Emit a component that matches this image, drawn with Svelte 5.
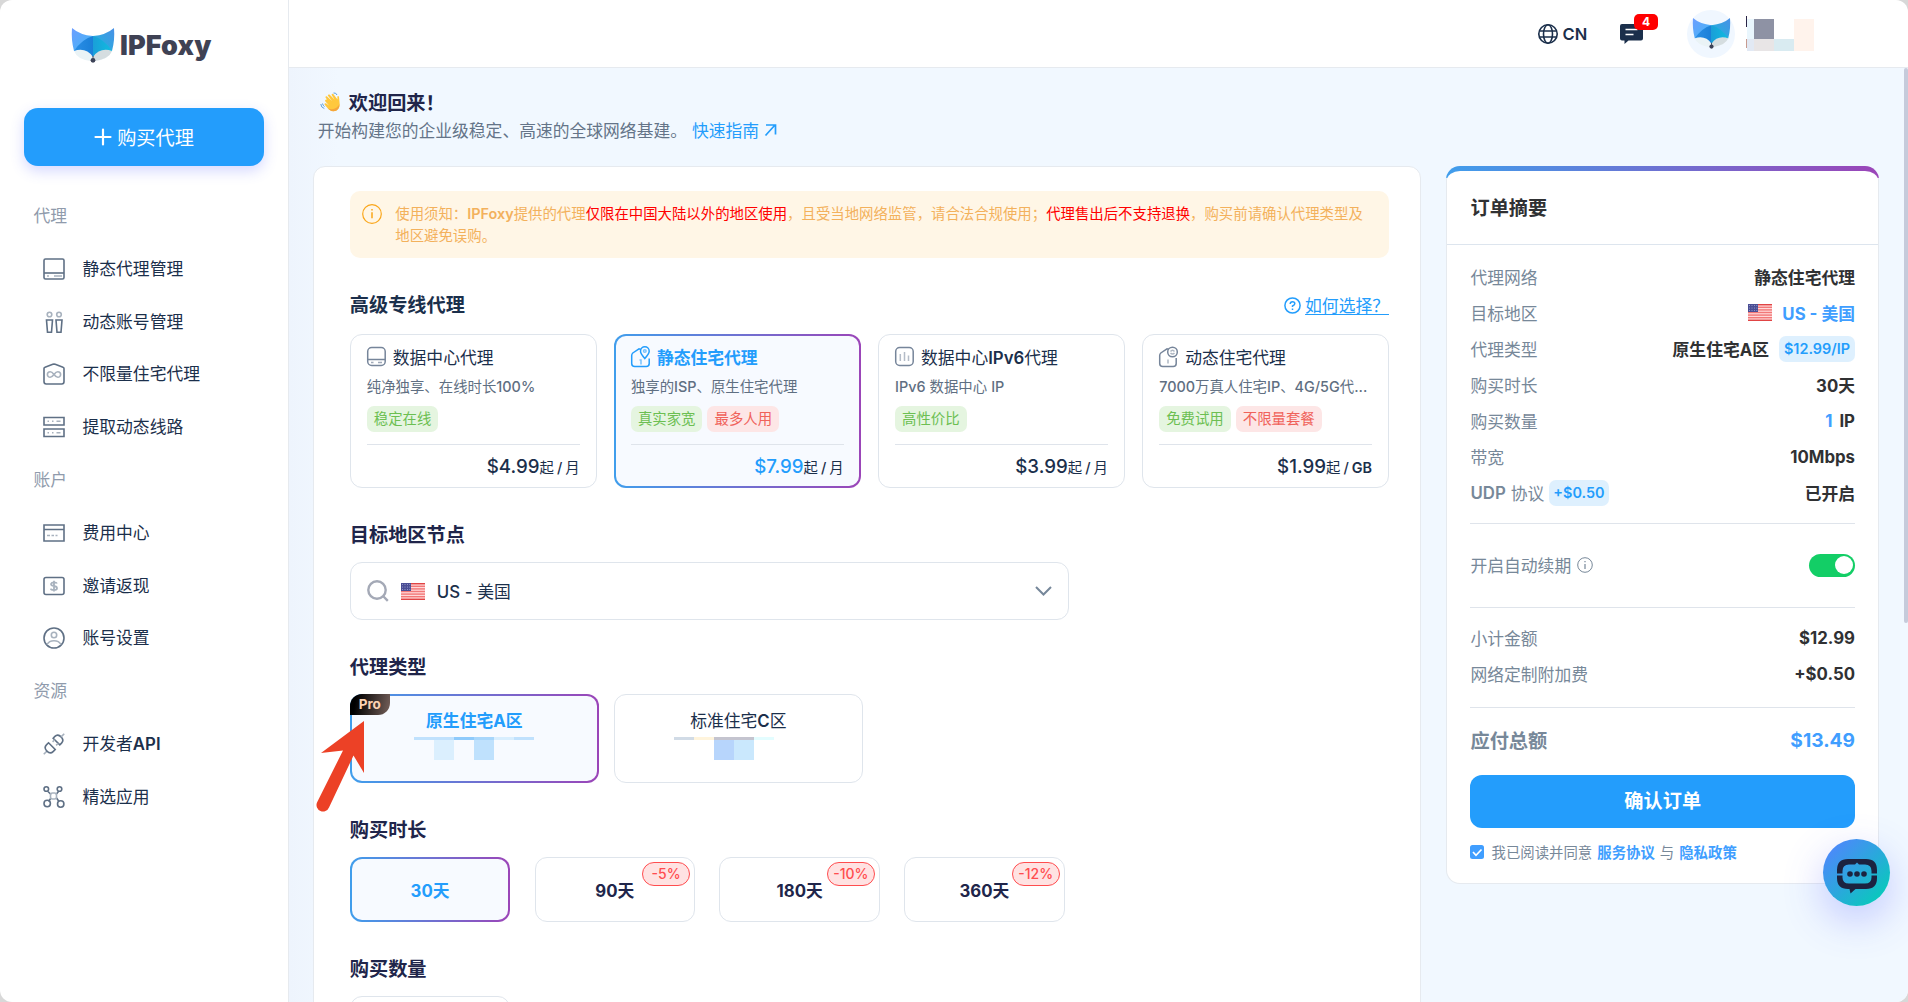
<script>
  const menu = [
    {
      label: '代理',
      items: [
        { icon: 'drive', name: '静态代理管理' },
        { icon: 'people', name: '动态账号管理' },
        { icon: 'infinite', name: '不限量住宅代理' },
        { icon: 'server', name: '提取动态线路' }
      ]
    },
    {
      label: '账户',
      items: [
        { icon: 'card', name: '费用中心' },
        { icon: 'cash', name: '邀请返现' },
        { icon: 'user', name: '账号设置' }
      ]
    },
    {
      label: '资源',
      items: [
        { icon: 'plug', name: '开发者API' },
        { icon: 'nodes', name: '精选应用' }
      ]
    }
  ];

  const products = [
    { id: 'dc', name: '数据中心代理', desc: '纯净独享、在线时长100%', tags: [['稳定在线', 'green']], price: '$4.99', unit: '月' },
    { id: 'isp', name: '静态住宅代理', desc: '独享的ISP、原生住宅代理', tags: [['真实家宽', 'green'], ['最多人用', 'red']], price: '$7.99', unit: '月' },
    { id: 'ipv6', name: '数据中心IPv6代理', desc: 'IPv6 数据中心 IP', tags: [['高性价比', 'green']], price: '$3.99', unit: '月' },
    { id: 'dyn', name: '动态住宅代理', desc: '7000万真人住宅IP、4G/5G代...', tags: [['免费试用', 'green'], ['不限量套餐', 'red']], price: '$1.99', unit: 'GB' }
  ];

  const types = [
    {
      name: '原生住宅A区',
      pro: true,
      shift: 0,
      strip: ['#c0e1fd', '#c0e1fd', '#8ecafb', '#a7d6fb', '#d8eefe', '#c0e1fd'],
      blocks: ['', '#dbeffe', '', '#bfe1fd', '', '']
    },
    {
      name: '标准住宅C区',
      pro: false,
      shift: 4,
      strip: ['#d1dbe6', '#fff4dc', '#c4c4cf', '#c4c4cf', '#e3fdff', ''],
      blocks: ['', '', '#b7d5fc', '#cae8fd', '', '']
    }
  ];

  const durations = [
    { days: 30 },
    { days: 90, off: '-5%' },
    { days: 180, off: '-10%' },
    { days: 360, off: '-12%' }
  ];

  let product = $state('isp');
  let type = $state('原生住宅A区');
  let days = $state(30);
  let autoRenew = $state(true);

  // latin runs are set heavier than the chinese around them
  const split = (text) => text.split(/([A-Za-z0-9$%.\/+\-]+)/).filter(Boolean);
  const isLatin = (part) => /^[A-Za-z0-9$%.\/+\-]/.test(part);
</script>

{#snippet mixed(text)}{#each split(text) as part}{#if isLatin(part)}<b class="en">{part}</b>{:else}{part}{/if}{/each}{/snippet}

{#snippet fox(w, h)}
  <svg width={w} height={h} viewBox="0 0 42 35">
    <defs>
      <linearGradient id="foxL" x1="0" y1="0" x2="1" y2="1">
        <stop offset="0" stop-color="#6d9dff" /><stop offset="1" stop-color="#3fb8f5" />
      </linearGradient>
      <linearGradient id="foxR" x1="1" y1="0" x2="0" y2="1">
        <stop offset="0" stop-color="#4a90e6" /><stop offset="1" stop-color="#1cb6dd" />
      </linearGradient>
      <linearGradient id="foxM" x1="0" y1="0.5" x2="1" y2="0.5">
        <stop offset="0" stop-color="#2b8fe6" /><stop offset="0.5" stop-color="#1a7fd8" />
        <stop offset="0.5" stop-color="#1a9fd8" /><stop offset="1" stop-color="#10bce0" />
      </linearGradient>
    </defs>
    <path d="M2 23 Q5 31 18 33 L21 28 L24 33 Q37 31 40 23 L30 20 L12 20Z" fill="#eaf3f6" />
    <path d="M40 23 Q37 31 22 33 L21 27 L31 20Z" fill="#d5dde0" />
    <path d="M0 0 Q8 7 21 8 L21 12 L2 23 Q-1 12 0 0Z" fill="url(#foxL)" />
    <path d="M42 0 Q34 7 21 8 L21 12 L40 23 Q43 12 42 0Z" fill="url(#foxR)" />
    <path d="M21 8 Q10 11 2 23 Q14 19 21 29 Q28 19 40 23 Q32 11 21 8Z" fill="url(#foxM)" />
    <path d="M21 28v3" stroke="#3c4257" />
    <circle cx="21" cy="32.3" r="2.4" fill="#3c4257" />
  </svg>
{/snippet}

{#snippet flag()}
  <svg class="flag" width="24" height="17" viewBox="0 0 24 17">
    <rect width="24" height="17" rx="1" fill="#ffd9d9" />
    {#each [0, 1, 2, 3, 4, 5, 6] as i}
      <rect y={i * 2.6} width="24" height="1.4" fill={i === 0 || i === 6 ? '#e04444' : '#f27878'} />
    {/each}
    <rect width="10" height="8" fill="#4a4e94" />
    <g fill="#a9abd6">
      {#each [1.5, 4, 6.5] as y}
        {#each [1.5, 4, 6.5, 8.8] as x}<circle cx={x} cy={y} r=".5" />{/each}
      {/each}
    </g>
  </svg>
{/snippet}

{#snippet menuIcon(name)}
  <svg width="22" height="22" viewBox="0 0 22 22" fill="none" stroke="#5f7085" stroke-width="1.6">
    {#if name === 'drive'}
      <rect x="1" y="1" width="20" height="20" rx="1.5" /><path d="M1 15h20" />
      <path d="M4 18h2M11 18h8" stroke="#a8b2be" />
    {:else if name === 'people'}
      <circle cx="6.5" cy="3.5" r="2.3" stroke="#a8b2be" /><circle cx="16" cy="3.5" r="2.3" stroke="#a8b2be" />
      <path d="M3.5 9h6l-1 12.3h-4zM13 9h6l-1 12.3h-4z" />
    {:else if name === 'infinite'}
      <path d="M1 18.5V5.500Q1 4.600 2 4.300L9.800 1.300Q11 .900 12.200 1.300L20 4.300Q21 4.600 21 5.500V18.500Q21 21 18.800 21H3.200Q1 21 1 18.500Z" />
      <path d="M11 11.500C9.500 9.500 8.500 8.700 7.200 8.700a2.800 2.800 0 0 0 0 5.600C8.500 14.300 9.500 13.500 11 11.500S13.500 8.700 14.800 8.700a2.800 2.800 0 0 1 0 5.600C13.500 14.300 12.500 13.500 11 11.500Z" stroke="#a8b2be" />
    {:else if name === 'server'}
      <path d="M1 1.500h20v7.500H1zM1 13h20v7.500H1z" />
      <path d="M4.500 5.300h1.500M9 5.300h1.500M13.500 5.300h4M4.500 16.800h1.500M9 16.800h1.500M13.500 16.800h4" stroke="#a8b2be" />
    {:else if name === 'card'}
      <path d="M1 3h20v16H1zM1 7.500h20" />
      <path d="M4 13.500h3M8.500 13.500h2.500M12.500 13.500h2" stroke="#a8b2be" />
    {:else if name === 'cash'}
      <rect x="1" y="2.500" width="20" height="17" rx="2" />
      <path d="M14 8.500Q13.500 7.300 11 7.300T8 9q0 1.600 3 2t3 2.200-3 1.800-3.200-1.400M11 5.700v10.800" stroke="#a8b2be" stroke-width="1.800" />
    {:else if name === 'user'}
      <circle cx="11" cy="11" r="10" />
      <circle cx="11" cy="8" r="2.700" stroke="#a8b2be" /><path d="M4 17.500Q6 13.700 11 13.700T18 17.500" stroke="#a8b2be" />
    {:else if name === 'plug'}
      <g transform="rotate(45 11 11)">
        <path d="M6.300 7.500V5Q6.300 1 11 1t4.700 4v2.500z" /><path d="M11 1v-4.500M11 21v4.500M8.500 7.500v3M13.500 7.500v3" stroke="#a8b2be" />
        <path d="M6.300 14V17Q6.300 21 11 21t4.700-4V14z" />
      </g>
    {:else}
      <path d="M5 5.500l3 3M15.500 5.500l-2.500 3M5.500 15.500l2.500-3.500M16 15.500l-2.500-3.500" />
      <rect x="7.500" y="7" width="6" height="6" rx="2" stroke="#a8b2be" />
      <circle cx="3.300" cy="3" r="2.300" /><circle cx="16.500" cy="3" r="2.300" />
      <circle cx="4.200" cy="17.500" r="3.200" /><circle cx="17.700" cy="18" r="3.200" />
    {/if}
  </svg>
{/snippet}

{#snippet productIcon(id)}
  <svg width="19" height="21" viewBox="0 0 19 21" fill="none" stroke="currentColor" stroke-width="1.500">
    {#if id === 'dc'}
      <rect x=".7" y="1.500" width="17.500" height="18" rx="4" /><path d="M.7 13.500h17.500" /><path d="M4 16.500h2.500M11 16.500h4" opacity=".7" />
    {:else if id === 'ipv6'}
      <rect x=".7" y="1.500" width="17.500" height="18" rx="4" />
      <path d="M5.300 8v7M9.500 6v9M13.500 9.500v5.500" opacity=".55" />
    {:else if id === 'isp'}
      <path d="M10 3.500 8 2.800 1.800 7Q.7 8 .7 9.500V17.500q0 3 3 3h11.500q3 0 3-3v-5" />
      <path d="M13.800 12.500Q9.500 7.500 9.500 5.200a4.300 4.300 0 0 1 8.700 0Q18.200 7.500 13.800 12.500Z" /><circle cx="13.800" cy="5" r="1.300" opacity=".6" />
      <path d="M8.500 14h1.500v4.500" opacity=".6" />
    {:else}
      <path d="M9.500 3.300 8 2.800 1.800 7Q.7 8 .7 9.500V17.500q0 3 3 3h10.500q3 0 3-3v-5.500" />
      <circle cx="13.500" cy="6" r="4.800" /><path d="M11.500 5.500q2-2.500 4 0M15.500 7q-2 2-4 0" opacity=".6" />
      <path d="M9 13.500v4" opacity=".6" />
    {/if}
  </svg>
{/snippet}

<div class="app">
  <aside class="sidebar">
    <div class="logo">
      {@render fox(42, 35)}
      <span>IPFoxy</span>
    </div>
    <button class="buy">
      <svg width="18" height="18" viewBox="0 0 18 18"><path d="M9 1.500v15M1.500 9h15" stroke="#fff" stroke-width="2.200" stroke-linecap="round" /></svg>
      <span>购买代理</span>
    </button>
    <nav>
      {#each menu as group}
        <div class="group-label">{group.label}</div>
        {#each group.items as item}
          <a class="menu-item" href="#top">{@render menuIcon(item.icon)}<span>{@render mixed(item.name)}</span></a>
        {/each}
      {/each}
    </nav>
  </aside>

  <div class="body">
    <header class="topbar">
      <div class="lang">
        <svg width="20" height="20" viewBox="0 0 20 20" fill="none" stroke="#1b2f4b" stroke-width="1.600">
          <circle cx="10" cy="10" r="9.200" /><ellipse cx="10" cy="10" rx="4.500" ry="9.200" /><path d="M1.500 7h17M1.500 13h17" />
        </svg>
        CN
      </div>
      <div class="message">
        <svg width="23" height="20" viewBox="0 0 23 20">
          <path d="M2 0h19q2 0 2 2v12.500q0 2-2 2H8.500L4.500 20v-3.500H2q-2 0-2-2V2Q0 0 2 0Z" fill="#1b2f4b" />
          <path d="M5.500 5.500h12M5.500 10.500h8" stroke="#fff" stroke-width="1.500" />
        </svg>
        <span class="count">4</span>
      </div>
      <div class="avatar">{@render fox(37, 31)}</div>
      <svg class="username" width="69" height="36" viewBox="0 0 69 36" shape-rendering="crispEdges">
        <path d="M0 0h1v11H0z" fill="#2a2547" /><path d="M0 23h1v9H0z" fill="#c79b90" />
        <path d="M1 3h7v20H1z" fill="#e9f6fd" /><path d="M8 3h20v20H8z" fill="#8e92a4" />
        <path d="M1 23h7v12H1z" fill="#e2e9f4" /><path d="M8 23h20v12H8z" fill="#e8e5e6" />
        <path d="M28 23h20v12H28z" fill="#d9ebf1" /><path d="M48 3h20v32H48z" fill="#fff3ec" />
      </svg>
    </header>

    <main>
      <div class="welcome">
        <h1>
          <svg width="20" height="20" viewBox="0 0 20 20">
            <path d="M7 7.500 5.500 5.500Q5.300 4 6.800 4.300L12 9 7.800 3.500Q8 2 9.500 2.500L14.500 7.500 11.500 2.800Q12 1.300 13.300 2L17.500 7.500 17.300 4.500Q18.500 3.500 19 5L19.700 12Q19.500 19 13.500 19.300Q10 19.300 7 15.500L4.500 12.500Q4.300 11 6 11.300L9 13.500 5 9Q5 7 7 7.500Z" fill="#ffc83d" />
            <path d="M19.600 12Q19.500 19 13.500 19.300Q10.500 19.300 8 16.500Q16 19 19.600 12Z" fill="#f5a63c" />
            <path d="M13.500 1Q16 .5 17 3M.8 12q.2 3.500 3.500 4.500M2.500 11.500q.3 2 2 3" fill="none" stroke="#5a9fe0" />
          </svg>
          欢迎回来！
        </h1>
        <p>
          开始构建您的企业级稳定、高速的全球网络基建。<a href="#top">快速指南
            <svg width="13" height="14" viewBox="0 0 13 14"><path d="M1.500 12.500 11 2M2 2h9.500v9.500" fill="none" stroke="currentColor" stroke-width="1.700" /></svg></a>
        </p>
      </div>

      <div class="columns">
        <section class="panel">
          <div class="notice">
            <svg width="20" height="20" viewBox="0 0 20 20" fill="none" stroke="#faa61a" stroke-width="1.200">
              <circle cx="10" cy="10" r="9.300" /><path d="M10 8.300v6M10 5v1.600" stroke-width="1.500" />
            </svg>
            <p>
              使用须知：<b class="en">IPFoxy</b>提供的代理<em>仅限在中国大陆以外的地区使用</em>，且受当地网络监管，请合法合规使用；<em>代理售出后不支持退换</em>，购买前请确认代理类型及<br />地区避免误购。
            </p>
          </div>

          <div class="section-head first">
            <h2>高级专线代理</h2>
            <a class="help" href="#top">
              <svg width="17" height="17" viewBox="0 0 17 17" fill="none" stroke="currentColor" stroke-width="1.500">
                <circle cx="8.500" cy="8.500" r="7.600" /><path d="M6.200 7q0-2.300 2.300-2.300T10.800 6.800Q10.800 8 8.500 9v1M8.500 11.500v1.500" />
              </svg>
              <u>如何选择？</u>
            </a>
          </div>
          <div class="products">
            {#each products as item}
              <button class="product" class:active={product === item.id} onclick={() => (product = item.id)}>
                <span class="product-name">{@render productIcon(item.id)}<span>{@render mixed(item.name)}</span></span>
                <span class="desc">{@render mixed(item.desc)}</span>
                <span class="tags">
                  {#each item.tags as [text, color]}<span class="tag {color}">{text}</span>{/each}
                </span>
                <span class="price"><strong>{item.price}</strong>起<i>/</i>{@render mixed(item.unit)}</span>
              </button>
            {/each}
          </div>

          <div class="section-head"><h2>目标地区节点</h2></div>
          <div class="region">
            <svg width="22" height="22" viewBox="0 0 22 22" fill="none" stroke="#a4a9b6" stroke-width="2.400"><circle cx="10" cy="10" r="8.700" /><path d="M16 16l4.800 4.800" /></svg>
            {@render flag()}
            <span>{@render mixed('US - 美国')}</span>
            <svg class="chevron" width="17" height="10" viewBox="0 0 17 10" fill="none" stroke="#76879a" stroke-width="2"><path d="M1 1l7.500 7.500L16 1" /></svg>
          </div>

          <div class="section-head"><h2>代理类型</h2></div>
          <div class="types">
            {#each types as item}
              <button class="type" class:active={type === item.name} onclick={() => (type = item.name)}>
                {#if item.pro}<span class="pro"><span>Pro</span></span>{/if}
                <span>{@render mixed(item.name)}</span>
                <svg width="120" height="23" viewBox="{item.shift} 0 120 23" shape-rendering="crispEdges">
                  {#each item.strip as color, i}<rect x={i * 20} width="20" height="3" fill={color || 'none'} />{/each}
                  {#each item.blocks as color, i}<rect x={i * 20} y="3" width="20" height="20" fill={color || 'none'} />{/each}
                </svg>
              </button>
            {/each}
            <svg class="arrow" width="52" height="94" viewBox="0 0 52 94" fill="#ec4126">
              <path d="M49 2 L49 54 L38.500 36.500 L14 88.500 A5.500 5.500 0 0 1 2 83.500 L28 31.500 L6 34Z" />
            </svg>
          </div>

          <div class="section-head"><h2>购买时长</h2></div>
          <div class="durations">
            {#each durations as item}
              <button class="duration" class:active={days === item.days} onclick={() => (days = item.days)}>
                {item.days}天
                {#if item.off}<span class="off">{item.off}</span>{/if}
              </button>
            {/each}
          </div>

          <div class="section-head"><h2>购买数量</h2></div>
          <div class="quantity"></div>
        </section>

        <aside class="summary">
          <h2>订单摘要</h2>
          <div class="summary-body">
            <div class="row"><span>代理网络</span><strong>静态住宅代理</strong></div>
            <div class="row"><span>目标地区</span><strong class="blue">{@render flag()}US - 美国</strong></div>
            <div class="row"><span>代理类型</span><strong>原生住宅A区<span class="chip">$12.99/IP</span></strong></div>
            <div class="row"><span>购买时长</span><strong>30天</strong></div>
            <div class="row"><span>购买数量</span><strong><span class="blue one">1</span>IP</strong></div>
            <div class="row"><span>带宽</span><strong>10Mbps</strong></div>
            <div class="row"><span>{@render mixed('UDP 协议')}<span class="chip plus">+$0.50</span></span><strong>已开启</strong></div>
            <div class="renew">
              <span>开启自动续期
                <svg width="16" height="16" viewBox="0 0 16 16" fill="none" stroke="currentColor"><circle cx="8" cy="8" r="7.300" /><path d="M8 7v5M8 4v1.300" stroke-width="1.200" /></svg>
              </span>
              <button class="switch" class:on={autoRenew} aria-label="开启自动续期" onclick={() => (autoRenew = !autoRenew)}></button>
            </div>
            <div class="costs">
              <div class="row"><span>小计金额</span><strong>$12.99</strong></div>
              <div class="row"><span>网络定制附加费</span><strong>+$0.50</strong></div>
            </div>
            <div class="total"><span>应付总额</span><span class="blue">$13.49</span></div>
            <button class="confirm">确认订单</button>
            <div class="agree">
              <svg width="14" height="14" viewBox="0 0 14 14"><rect width="14" height="14" rx="2.500" fill="#409eff" /><path d="M3 7l3 3.300L11.500 4.500" fill="none" stroke="#fff" stroke-width="1.700" /></svg>
              <span>我已阅读并同意</span><a href="#top">服务协议</a><span>与</span><a href="#top">隐私政策</a>
            </div>
          </div>
        </aside>
      </div>
    </main>
  </div>

  <div class="scrollbar"></div>
  <button class="chat" aria-label="chat">
    <svg width="40" height="35" viewBox="0 0 40 35">
      <path d="M0 14.500V11Q0 0 11 0H29Q40 0 40 11V14.500H34.500V12Q34.500 5.500 28 5.500H22L20 3.500 18 5.500H12Q5.500 5.500 5.500 12V14.500ZM0 16.500H5.500V18.500Q5.500 24.500 12 24.500H28Q34.500 24.500 34.500 18.500V16.500H40V19Q40 30 29 30H18.500L13.500 34.500 12.500 30H11Q0 30 0 19Z" fill="#1c2340" />
      <g fill="#1c2340"><circle cx="13" cy="15" r="2.800" /><circle cx="20" cy="15" r="2.800" /><circle cx="27" cy="15" r="2.800" /></g>
    </svg>
  </button>
</div>

<style>
  :global(body) {
    margin: 0;
    background: #d8d8d8;
    overflow: hidden;
  }

  .app {
    position: relative;
    display: flex;
    width: 1908px;
    height: 1002px;
    overflow: hidden;
    border-radius: 12px;
    background: #fff;
    color: #1b2f4b;
    font-family: Inter, 'Noto Sans CJK SC', sans-serif;
    font-size: 16.8px;
  }

  button {
    font: inherit;
    color: inherit;
    padding: 0;
    border: 0;
    background: none;
    cursor: pointer;
  }
  a {
    color: inherit;
    text-decoration: none;
  }
  svg {
    display: block;
    flex: none;
    overflow: visible;
  }
  h1, h2, p {
    margin: 0;
  }
  .en {
    font-weight: 600;
  }
  .blue {
    color: #409eff;
  }

  /* sidebar */
  .sidebar {
    width: 288px;
    flex: none;
    border-right: 1px solid #e6eaef;
    box-sizing: content-box;
  }
  .logo {
    display: flex;
    align-items: flex-start;
    gap: 6px;
    height: 80px;
    padding: 28px 0 0 72px;
    color: #3f4254;
    font-size: 27px;
    font-weight: 900;
    line-height: 35px;
    letter-spacing: 0.1px;
  }
  .buy {
    display: flex;
    align-items: center;
    justify-content: center;
    gap: 5px;
    width: 240px;
    height: 58px;
    margin: 0 24px 23.6px;
    border-radius: 14px;
    background: #239dfc;
    color: #fff;
    font-size: 19.2px;
    box-shadow: 0 5px 14px rgba(80, 90, 255, 0.24);
  }
  .buy span {
    padding-bottom: 1px;
  }
  .group-label,
  .menu-item {
    display: flex;
    align-items: center;
    height: 52.8px;
  }
  .group-label {
    padding-left: 33.5px;
    color: #909bac;
    line-height: 24px;
  }
  .menu-item {
    gap: 17.5px;
    padding-left: 43px;
  }
  .menu-item span {
    padding-bottom: 2px;
  }

  /* header */
  .body {
    flex: 1;
    min-width: 0;
    display: flex;
    flex-direction: column;
  }
  .topbar {
    display: flex;
    align-items: center;
    justify-content: flex-end;
    height: 67px;
    flex: none;
    padding-right: 93px;
    border-bottom: 1px solid #e6eaef;
  }
  .lang {
    display: flex;
    align-items: center;
    gap: 4.5px;
    font-size: 16.5px;
    font-weight: 600;
    width: 82px;
  }
  .message {
    position: relative;
    width: 67px;
  }
  .count {
    position: absolute;
    top: -10px;
    left: 14px;
    width: 24px;
    height: 16px;
    border-radius: 5px;
    background: #f00;
    color: #fff;
    font-size: 12px;
    font-weight: 700;
    line-height: 16px;
    text-align: center;
  }
  .avatar {
    display: flex;
    align-items: center;
    justify-content: center;
    width: 48px;
    height: 48px;
    margin-right: 11px;
    border-radius: 50%;
    background: #f0f7ff;
  }

  /* content */
  main {
    flex: 1;
    min-height: 0;
    padding: 0 28px 0 24.3px;
    background: linear-gradient(90deg, #eef4fd, #f1f8ff 50px);
  }
  .welcome {
    height: 98px;
    box-sizing: border-box;
    padding: 19px 0 0 4.5px;
  }
  h1 {
    display: flex;
    align-items: center;
    gap: 9px;
    height: 29px;
    padding-left: 2px;
    color: #20254a;
    font-size: 19.2px;
  }
  .welcome p {
    display: flex;
    align-items: center;
    gap: 5px;
    height: 28px;
    color: #647488;
  }
  .welcome a {
    display: flex;
    align-items: center;
    gap: 5px;
    color: #239dfc;
  }
  .columns {
    display: flex;
    gap: 25px;
    align-items: flex-start;
  }

  .panel {
    width: 1108.2px;
    height: 860px;
    flex: none;
    box-sizing: border-box;
    padding: 24px 31.5px 0 35.5px;
    border: 1px solid #e6eaef;
    border-radius: 12px;
    background: #fff;
  }
  .notice {
    display: flex;
    gap: 13.5px;
    height: 67px;
    box-sizing: border-box;
    padding: 12px 0 0 12px;
    border-radius: 10px;
    background: #fff6e6;
    color: #f3b15c;
    font-size: 14.4px;
    line-height: 22px;
    white-space: nowrap;
  }
  .notice svg {
    margin-top: 1px;
  }
  .notice p {
    margin-top: -0.5px;
  }
  .notice em {
    color: #f00;
    font-style: normal;
  }
  .section-head {
    display: flex;
    align-items: center;
    justify-content: space-between;
    height: 28px;
    margin: 33px 0 13px;
  }
  .section-head.first {
    margin: 33px 0 14.5px;
  }
  .section-head h2 {
    color: #20254a;
    font-size: 19.2px;
    line-height: 28px;
  }
  .section-head.first h2 {
    color: #1b2f4b;
  }
  .help {
    display: flex;
    align-items: center;
    gap: 4px;
    color: #239dfc;
  }
  .help u {
    text-underline-offset: 2px;
  }

  .products {
    display: grid;
    grid-template-columns: repeat(4, 1fr);
    gap: 17.3px;
  }
  .product,
  .type,
  .duration,
  .quantity,
  .region {
    box-sizing: border-box;
    border: 1px solid #dfe5ec;
    border-radius: 12px;
    background: #fff;
  }
  .product.active,
  .type.active,
  .duration.active {
    border: 2px solid transparent;
    background:
      linear-gradient(#f7faff, #f7faff) padding-box,
      linear-gradient(90deg, #409eec, #9b45b8) border-box;
    color: #239dfc;
    font-weight: 700;
  }
  .product {
    display: flex;
    flex-direction: column;
    height: 154.5px;
    min-width: 0;
    padding: 9px 16px 0;
    text-align: left;
  }
  .product.active {
    padding: 8px 15px 0;
  }
  .product-name {
    display: flex;
    align-items: center;
    gap: 7px;
    height: 26px;
    white-space: nowrap;
  }
  .product-name svg {
    color: #76859a;
  }
  .active .product-name svg {
    color: #239dfc;
  }
  .desc {
    margin-top: 5px;
    color: #5f6f82;
    font-size: 14.4px;
    font-weight: 400;
    line-height: 24px;
    white-space: nowrap;
  }
  .desc .en {
    font-weight: 500;
  }
  .tags {
    display: flex;
    gap: 5px;
    margin-top: 7px;
    padding-bottom: 12px;
    border-bottom: 1px solid #dfe4eb;
    font-size: 14.4px;
    font-weight: 400;
    line-height: 26px;
  }
  .tag {
    padding: 0 7px;
    border-radius: 7px;
  }
  .tag.green {
    background: #e5f5e0;
    color: #6cbf52;
  }
  .tag.red {
    background: #fde6e6;
    color: #f0625a;
  }
  .price {
    margin-top: 9px;
    color: #1b2f4b;
    font-size: 14.4px;
    font-weight: 400;
    line-height: 26px;
    text-align: right;
  }
  .price strong {
    font-size: 18.7px;
    font-weight: 500;
  }
  .price i {
    margin: 0 3px;
    font-style: normal;
    font-weight: 500;
  }
  .active .price strong {
    color: #239dfc;
  }

  .region {
    display: flex;
    align-items: center;
    width: 719.5px;
    height: 58px;
    padding: 0 16px;
  }
  .region .flag {
    margin: 0 12px 0 12px;
  }
  .region .en {
    font-weight: 500;
  }
  .chevron {
    margin-left: auto;
  }

  .types {
    position: relative;
    display: flex;
    gap: 15px;
  }
  .type {
    position: relative;
    display: flex;
    flex-direction: column;
    align-items: center;
    width: 249px;
    height: 89px;
    padding-top: 14px;
    line-height: 25px;
  }
  .type.active {
    padding-top: 13px;
  }
  .type svg {
    margin-top: 3px;
  }
  .active .en {
    font-weight: 700;
  }
  .product.active .desc .en,
  .product.active .price .en {
    font-weight: 500;
  }
  .pro {
    position: absolute;
    top: -2px;
    left: -2px;
    width: 40px;
    height: 21px;
    border-radius: 12px 0 12px 0;
    background: linear-gradient(100deg, #000 15%, #75605a);
    font-size: 13.5px;
    font-weight: 700;
    line-height: 21px;
    text-align: center;
  }
  .pro span {
    color: #fcd3b4;
  }
  .arrow {
    position: absolute;
    left: -35px;
    top: 25px;
  }

  .durations {
    display: flex;
    gap: 24.3px;
  }
  .duration {
    position: relative;
    width: 160.5px;
    height: 65px;
    font-weight: 700;
    color: #20254a;
  }
  .off {
    position: absolute;
    top: 4px;
    right: 4px;
    width: 48px;
    height: 24px;
    box-sizing: border-box;
    border: 1px solid #ff4d4f;
    border-radius: 12px;
    background: #ffe2e2;
    color: #ff4d4f;
    font-size: 14px;
    font-weight: 500;
    line-height: 21px;
    text-align: center;
  }
  .quantity {
    width: 160.5px;
    height: 60px;
  }

  /* order summary */
  .summary {
    width: 433px;
    height: 717.5px;
    flex: none;
    box-sizing: border-box;
    border: 1px solid transparent;
    border-top-width: 5px;
    border-radius: 14px;
    background:
      linear-gradient(#fff, #fff) padding-box,
      linear-gradient(90deg, #409eec, #9b45b8) top / 100% 12px no-repeat border-box,
      linear-gradient(#e6eaef, #e6eaef) border-box;
  }
  .summary h2 {
    height: 73px;
    padding-left: 23px;
    border-bottom: 1px solid #dde5ee;
    color: #303133;
    font-size: 19.2px;
    line-height: 75px;
  }
  .summary-body {
    padding: 13.5px 23.5px 0 23px;
    color: #778899;
  }
  .row,
  .renew,
  .total {
    display: flex;
    align-items: center;
    justify-content: space-between;
    height: 36px;
  }
  .row > span,
  .row > strong {
    display: flex;
    align-items: center;
  }
  .row strong {
    color: #303133;
    font-weight: 700;
  }
  .row .en {
    margin-right: 5px;
  }
  .row strong.blue,
  .row .one {
    color: #409eff;
  }
  .row .one {
    margin-right: 7px;
  }
  .row .flag {
    margin-right: 10px;
  }
  .chip {
    margin-left: 10px;
    padding: 0 5px;
    border-radius: 7px;
    background: #def0fe;
    color: #239dfc;
    font-size: 14.4px;
    font-weight: 600;
    line-height: 26px;
  }
  .chip.plus {
    margin-left: 5px;
    padding: 0 4px;
  }
  .renew {
    height: 83px;
    margin-top: 12px;
    border: solid #dfe4eb;
    border-width: 1px 0;
  }
  .renew span {
    display: flex;
    align-items: center;
    gap: 6px;
  }
  .switch {
    position: relative;
    width: 46px;
    height: 23px;
    border-radius: 12px;
    background: #c0c4cc;
  }
  .switch::after {
    content: '';
    position: absolute;
    top: 2.500px;
    left: 2px;
    width: 18px;
    height: 18px;
    border-radius: 50%;
    background: #fff;
  }
  .switch.on {
    background: #13ce66;
  }
  .switch.on::after {
    left: 26px;
  }
  .costs {
    padding: 12px 0 15px;
    border-bottom: 1px solid #dfe4eb;
  }
  .total {
    height: 64px;
    padding-bottom: 3px;
    font-size: 19.2px;
    font-weight: 700;
  }
  .confirm {
    display: block;
    width: 100%;
    height: 53px;
    padding-bottom: 2px;
    border-radius: 12px;
    background: #239dfc;
    color: #fff;
    font-size: 19.2px;
    font-weight: 700;
  }
  .agree {
    display: flex;
    align-items: center;
    gap: 5px;
    height: 48px;
    font-size: 14.4px;
  }
  .agree svg {
    margin-right: 2px;
  }
  .agree a {
    color: #409eff;
    font-weight: 700;
  }

  .scrollbar {
    position: absolute;
    top: 68px;
    right: 0;
    width: 4px;
    height: 555px;
    border-radius: 2px;
    background: #c6cbdb;
  }
  .chat {
    position: absolute;
    top: 839px;
    left: 1823px;
    display: flex;
    align-items: center;
    justify-content: center;
    width: 67px;
    height: 67px;
    padding-top: 7px;
    border-radius: 50%;
    background: linear-gradient(135deg, #5086fd 8%, #2ba7dd 50%, #05cdb8 92%);
    box-shadow: 0 14px 40px rgba(80, 90, 255, 0.3);
    box-sizing: border-box;
  }
</style>
